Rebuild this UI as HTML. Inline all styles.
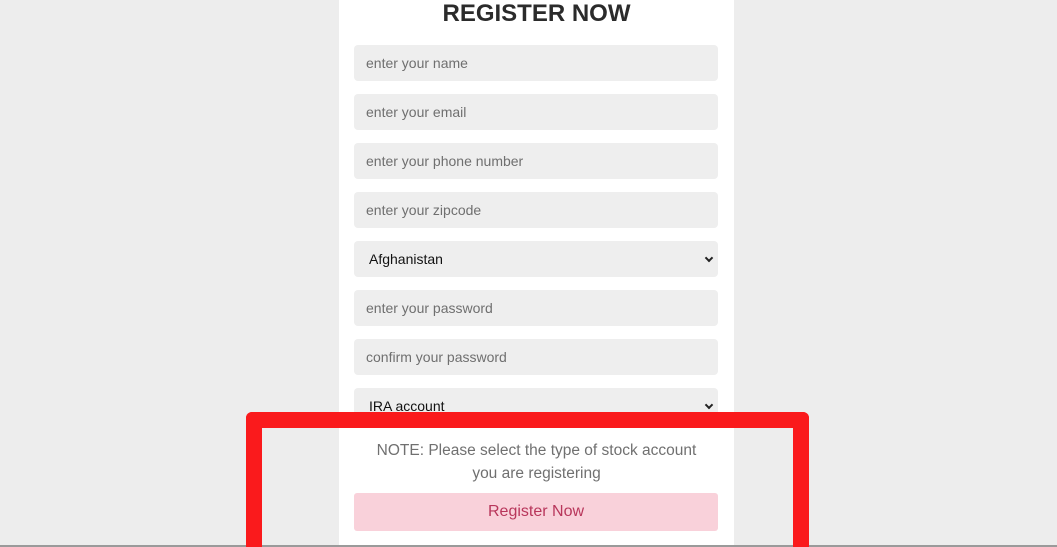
<!DOCTYPE html>
<html style="overflow:hidden;height:547px"><head><style>
body{margin:0;width:1057px;height:547px;background:#ededed;position:relative;overflow:hidden;font-family:"Liberation Sans",sans-serif}
.card{position:absolute;left:339px;top:0;width:395px;height:547px;background:#fff}
h1{position:absolute;left:339px;width:395px;top:0;margin:0;text-align:center;font-size:24px;font-weight:bold;color:#2b2b2b;line-height:27px}
.f{position:absolute;left:354px;width:364px;height:36px;background:#eeeeee;border-radius:4px;font-size:14px;color:#6f6f6f;line-height:36px;padding-left:12px;box-sizing:border-box}
.s{color:#111;padding-left:15px}
.s:after{content:"";position:absolute;right:6px;top:14px;width:4px;height:4px;border-right:2px solid #222;border-bottom:2px solid #222;transform:rotate(45deg)}
.note{position:absolute;left:339px;width:395px;top:439px;text-align:center;font-size:15.5px;line-height:23px;color:#707070}
.btn{position:absolute;left:354px;top:493px;width:364px;height:38px;background:#f9d1da;border-radius:3px;text-align:center;line-height:38px;color:#b8365b;font-size:16px}
.red{position:absolute;left:246px;top:412px;width:531px;height:140px;border:16px solid #fa1a1c;border-bottom:none;border-radius:6px 6px 0 0}
.line{position:absolute;left:0;top:545px;width:1057px;height:2px;background:#9a9a9a}
</style></head><body>
<div class="card"></div>
<h1>REGISTER NOW</h1>
<div class="f" style="top:45px">enter your name</div>
<div class="f" style="top:94px">enter your email</div>
<div class="f" style="top:143px">enter your phone number</div>
<div class="f" style="top:192px">enter your zipcode</div>
<div class="f s" style="top:241px">Afghanistan</div>
<div class="f" style="top:290px">enter your password</div>
<div class="f" style="top:339px">confirm your password</div>
<div class="f s" style="top:388px">IRA account</div>
<div class="note">NOTE: Please select the type of stock account<br>you are registering</div>
<div class="btn">Register Now</div>
<div class="line"></div>
<div class="red"></div>
</body></html>
